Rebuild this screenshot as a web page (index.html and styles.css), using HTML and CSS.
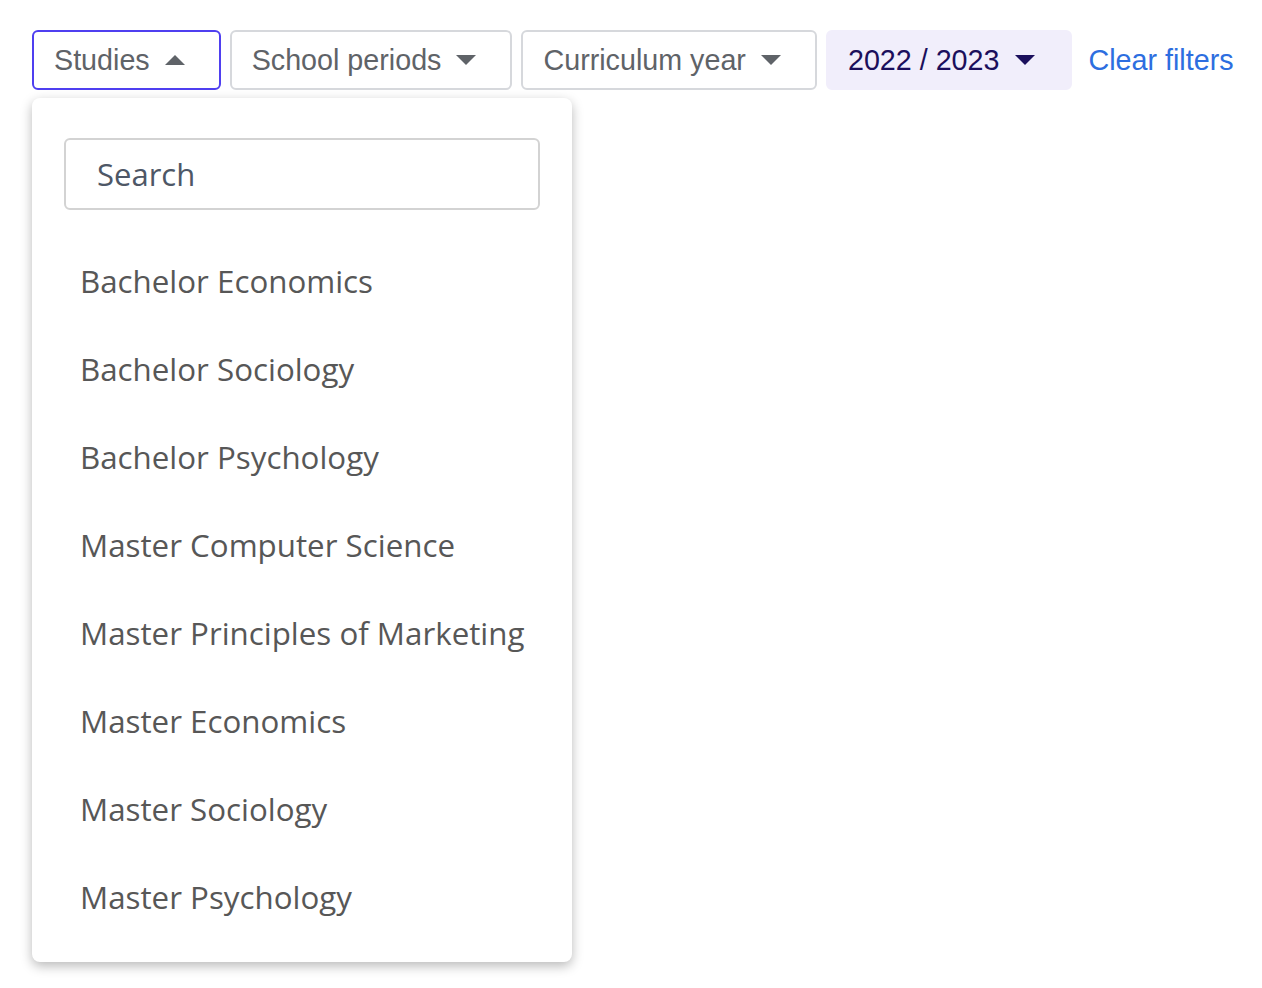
FILE: index.html
```html
<!DOCTYPE html>
<html lang="en">
<head>
    <meta charset="UTF-8">
    <meta name="viewport" content="width=device-width, initial-scale=1.0">
    <title>Filters</title>
    <link rel="stylesheet" href="styles.css">
</head>
<body>

    <div class="filters">
        <div class="filter">
            <button class="filter-btn active" type="button">Studies <span class="caret up"></span></button>

            <div class="dropdown">
                <input class="search" type="text" placeholder="Search">
                <ul class="options">
                    <li>Bachelor Economics</li>
                    <li>Bachelor Sociology</li>
                    <li>Bachelor Psychology</li>
                    <li>Master Computer Science</li>
                    <li>Master Principles of Marketing</li>
                    <li>Master Economics</li>
                    <li>Master Sociology</li>
                    <li>Master Psychology</li>
                </ul>
            </div>
        </div>

        <button class="filter-btn" type="button">School periods <span class="caret"></span></button>
        <button class="filter-btn" type="button">Curriculum year <span class="caret"></span></button>
        <button class="filter-btn selected" type="button">2022 / 2023 <span class="caret"></span></button>

        <a class="clear" href="#">Clear filters</a>
    </div>

</body>
</html>
```

FILE: styles.css
```css
html, body {
    height: 100%;
}

body {
    font-family: "Liberation Sans", Arial, sans-serif;
    background-color: #fff;
    margin: 0;
    padding: 30px 0 0 32px;
    box-sizing: border-box;
}

.filters {
    display: flex;
    align-items: center;
    gap: 9px;
    white-space: nowrap;
}

.filters > * {
    flex-shrink: 0;
}

.filter {
    position: relative;
}

.filter-btn {
    display: flex;
    align-items: center;
    height: 60px;
    padding: 0 34px 0 20px;
    font-family: "Liberation Sans", Arial, sans-serif;
    font-size: 28.7px;
    line-height: 1;
    color: #5f6368;
    background-color: #fff;
    border: 2px solid #d6d8dc;
    border-radius: 6px;
    cursor: pointer;
}

.filter-btn.active {
    border-color: #4f3ff0;
}

.filter-btn.selected {
    background-color: #f1eefb;
    border-color: #f1eefb;
    color: #1b0f5c;
    padding-right: 35px;
}

.selected .caret {
    margin-left: 16px;
}

.caret {
    display: inline-block;
    width: 0;
    height: 0;
    margin-left: 15px;
    border-left: 10px solid transparent;
    border-right: 10px solid transparent;
    border-top: 10px solid currentColor;
}

.caret.up {
    border-top: none;
    border-bottom: 10px solid currentColor;
}

.clear {
    margin-left: 7px;
    font-size: 28.7px;
    color: #2d6ee0;
    text-decoration: none;
}

.dropdown {
    position: absolute;
    top: 68px;
    left: 0;
    width: 476px;
    padding: 40px 32px 20px;
    background-color: #fff;
    border-radius: 8px;
    box-shadow: 0 4px 12px rgba(0, 0, 0, 0.28);
    z-index: 10;
}

.search {
    display: block;
    box-sizing: border-box;
    width: 100%;
    height: 72px;
    padding: 0 31px;
    font-family: "Open Sans", sans-serif;
    font-size: 31px;
    border: 2px solid #d3d3d3;
    border-radius: 6px;
    outline: none;
}

.search::placeholder {
    color: #4e5766;
}

.options {
    list-style: none;
    margin: 28px 0 0;
    padding: 0;
}

.options li {
    height: 88px;
    line-height: 87px;
    padding: 0 16px;
    font-family: "Open Sans", sans-serif;
    font-size: 31.3px;
    color: #575757;
}
```
